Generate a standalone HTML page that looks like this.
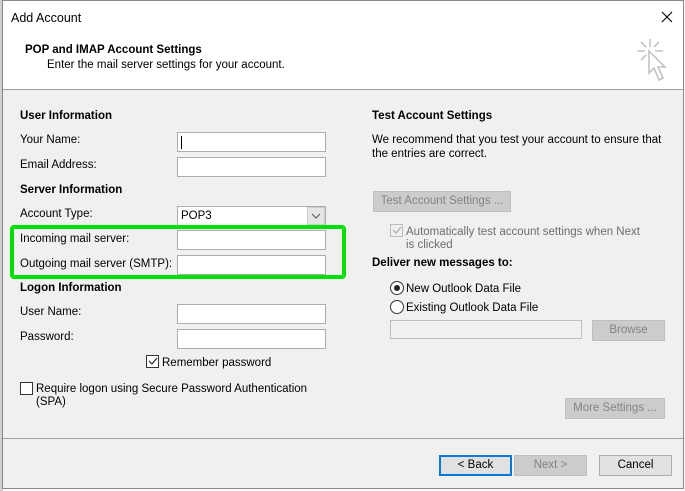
<!DOCTYPE html>
<html><head><style>
*{margin:0;padding:0;box-sizing:border-box}
body{width:685px;height:491px;background:#fff;font-family:"Liberation Sans",sans-serif;font-size:11.5px;color:#000;position:relative;overflow:hidden}
.a{position:absolute;white-space:nowrap;line-height:18px}
.b{font-weight:bold}
.in{position:absolute;background:#fff;border:1px solid #adadad;height:20px}
.btn{position:absolute;background:#e1e1e1;border:1px solid #adadad;text-align:center;line-height:19px;height:21px}
.dis{background:#cccccc;border-color:#bfbfbf;color:#838383}
.cb{position:absolute;width:13px;height:13px;border:1px solid #333;background:#fff}
</style></head><body>
<div class="a" style="left:0;top:0;width:3px;height:491px;background:#d0d0d0"></div>
<div class="a" style="left:2px;top:0;width:682px;height:489px;border:1px solid #888;background:#f0f0f0"></div>
<div class="a" style="left:3px;top:1px;width:680px;height:89px;background:#fff;border-bottom:1px solid #a0a0a0"></div>
<div class="a" style="left:11px;top:9px;font-size:12.5px">Add Account</div>
<svg class="a" style="left:661px;top:11px" width="12" height="12"><path d="M1 1L11 11M11 1L1 11" stroke="#000" stroke-width="1.1"/></svg>
<div class="a b" style="left:25px;top:41px">POP and IMAP Account Settings</div>
<div class="a" style="left:47px;top:56px">Enter the mail server settings for your account.</div>
<svg class="a" style="left:633px;top:37px" width="40" height="50"><g stroke="#c3c3c3" stroke-width="1.6" fill="none"><path d="M17 2V10M4 14H12M22 14H30M8 5L13 10M26 5L21 10M8 23L13 18"/><path d="M16 14L16 36L21 31L26 43L30 41L25 30L32 30Z" fill="#fff"/></g></svg>

<div class="a b" style="left:20px;top:107px">User Information</div>
<div class="a" style="left:20px;top:131px">Your Name:</div>
<div class="in" style="left:177px;top:132px;width:149px"></div>
<div class="a" style="left:181px;top:136px;width:1px;height:13px;background:#000"></div>
<div class="a" style="left:20px;top:156px">Email Address:</div>
<div class="in" style="left:177px;top:157px;width:149px"></div>
<div class="a b" style="left:20px;top:181px">Server Information</div>
<div class="a" style="left:20px;top:205px">Account Type:</div>
<div class="in" style="left:177px;top:206px;width:149px;background:#fff"></div>
<div class="a" style="left:181px;top:207px">POP3</div>
<div class="a" style="left:307px;top:207px;width:18px;height:18px;background:#e5e5e5;border:1px solid #ccc"></div>
<svg class="a" style="left:311px;top:213px" width="10" height="6"><path d="M1 1L5 5L9 1" stroke="#555" fill="none"/></svg>
<div class="a" style="left:20px;top:230px">Incoming mail server:</div>
<div class="in" style="left:177px;top:230px;width:149px"></div>
<div class="a" style="left:20px;top:255px">Outgoing mail server (SMTP):</div>
<div class="in" style="left:177px;top:255px;width:149px"></div>
<div class="a" style="left:10px;top:225px;width:336px;height:54px;border:4px solid #00e000;border-radius:4px"></div>
<div class="a b" style="left:20px;top:279px">Logon Information</div>
<div class="a" style="left:20px;top:303px">User Name:</div>
<div class="in" style="left:177px;top:304px;width:149px"></div>
<div class="a" style="left:20px;top:328px">Password:</div>
<div class="in" style="left:177px;top:329px;width:149px"></div>
<div class="cb" style="left:146px;top:355px"></div>
<svg class="a" style="left:148px;top:357px" width="10" height="9"><path d="M1 4L4 7L9 1" stroke="#222" stroke-width="1.2" fill="none"/></svg>
<div class="a" style="left:162px;top:354px">Remember password</div>
<div class="cb" style="left:20px;top:382px"></div>
<div class="a" style="left:36px;top:380px">Require logon using Secure Password Authentication</div>
<div class="a" style="left:36px;top:393px">(SPA)</div>

<div class="a b" style="left:372px;top:107px">Test Account Settings</div>
<div class="a" style="left:372px;top:131px">We recommend that you test your account to ensure that</div>
<div class="a" style="left:372px;top:145px">the entries are correct.</div>
<div class="btn dis" style="left:373px;top:191px;width:138px">Test Account Settings ...</div>
<div class="cb" style="left:390px;top:224px;border-color:#bbb;background:#f0f0f0"></div>
<svg class="a" style="left:392px;top:226px" width="10" height="9"><path d="M1 4L4 7L9 1" stroke="#aaa" stroke-width="1.2" fill="none"/></svg>
<div class="a" style="left:406px;top:223px;color:#6d6d6d">Automatically test account settings when Next</div>
<div class="a" style="left:406px;top:236px;color:#6d6d6d">is clicked</div>
<div class="a b" style="left:372px;top:254px">Deliver new messages to:</div>
<div class="a" style="left:390px;top:281px;width:14px;height:14px;border:1px solid #333;border-radius:50%;background:#fff"></div>
<div class="a" style="left:394px;top:285px;width:6px;height:6px;border-radius:50%;background:#222"></div>
<div class="a" style="left:406px;top:280px">New Outlook Data File</div>
<div class="a" style="left:390px;top:300px;width:14px;height:14px;border:1px solid #333;border-radius:50%;background:#fff"></div>
<div class="a" style="left:406px;top:299px">Existing Outlook Data File</div>
<div class="a" style="left:390px;top:320px;width:192px;height:19px;border:1px solid #bfbfbf;background:#f0f0f0"></div>
<div class="btn dis" style="left:592px;top:320px;width:73px">Browse</div>
<div class="btn dis" style="left:565px;top:398px;width:100px">More Settings ...</div>

<div class="a" style="left:3px;top:438px;width:680px;height:1px;background:#a0a0a0"></div>
<div class="btn" style="left:439px;top:455px;width:73px;border:2px solid #0078d7;line-height:17px">&lt; Back</div>
<div class="btn dis" style="left:514px;top:455px;width:73px">Next &gt;</div>
<div class="btn" style="left:599px;top:455px;width:73px">Cancel</div>
</body></html>
